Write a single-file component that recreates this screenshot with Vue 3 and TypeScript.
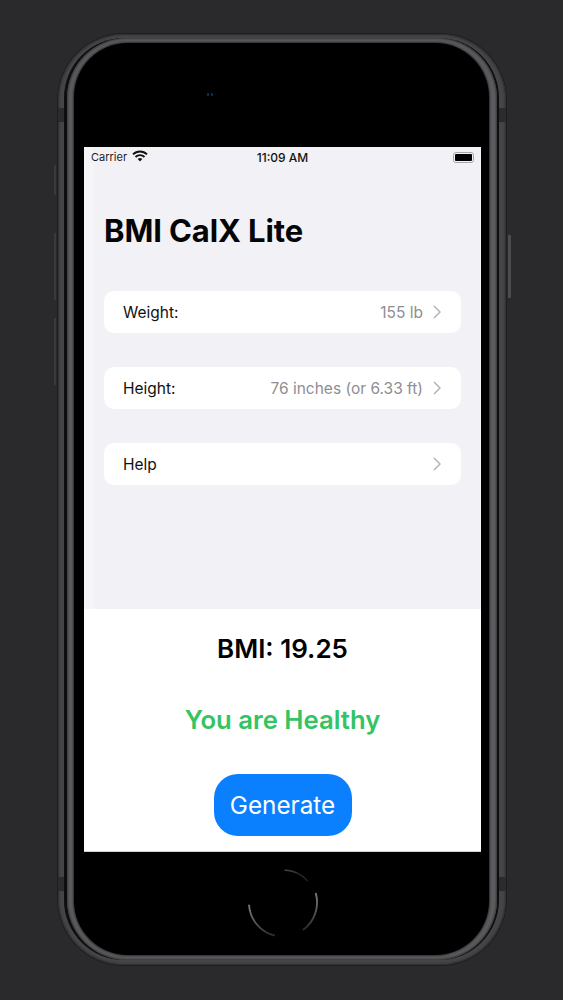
<script setup lang="ts">
interface Row { label: string; value?: string }
const rows: Row[] = [
  { label: 'Weight:', value: '155 lb' },
  { label: 'Height:', value: '76 inches (or 6.33 ft)' },
  { label: 'Help' },
]
</script>

<template>
  <div class="page">
    <div class="phone">
      <span class="side-btn mute"></span>
      <span class="side-btn vol-up"></span>
      <span class="side-btn vol-down"></span>
      <span class="side-btn power"></span>
      <div class="band-outer">
        <div class="band-gap">
          <div class="band-inner">
            <div class="face">
              <div class="bezel-top">
                <span class="camera"><i></i><i></i></span>
              </div>
              <div class="screen">
                <div class="status">
                  <div class="status-left">
                    <span>Carrier</span>
                    <svg class="wifi" viewBox="0 0 16 12" width="16" height="12" aria-hidden="true">
                      <path d="M1 4.4A10 10 0 0 1 15 4.4" fill="none" stroke="#111" stroke-width="1.9" />
                      <path d="M3.5 7A6.4 6.4 0 0 1 12.5 7" fill="none" stroke="#111" stroke-width="1.9" />
                      <path d="M8 11.4L5.7 9.1A3.2 3.2 0 0 1 10.3 9.1Z" fill="#111" />
                    </svg>
                  </div>
                  <span class="clock">11:09 AM</span>
                  <div class="status-right">
                    <span class="battery"><i></i></span>
                  </div>
                </div>
                <div class="content">
                  <h1>BMI CalX Lite</h1>
                  <div class="rows">
                    <div v-for="row in rows" :key="row.label" class="row">
                      <span class="label">{{ row.label }}</span>
                      <span class="value">{{ row.value }}</span>
                      <svg class="chev" viewBox="0 0 8 14" width="8" height="14" aria-hidden="true">
                        <path d="M1 1L7 7L1 13" fill="none" stroke="#b4b4b8" stroke-width="1.5" />
                      </svg>
                    </div>
                  </div>
                </div>
                <div class="result">
                  <div class="bmi">BMI: 19.25</div>
                  <div class="health">You are Healthy</div>
                  <button class="generate" type="button">Generate</button>
                </div>
              </div>
              <div class="bezel-bottom">
                <svg class="home" viewBox="0 0 72 72" width="72" height="72" aria-hidden="true">
                  <defs>
                    <linearGradient id="arcTop" gradientUnits="userSpaceOnUse" x1="37" y1="3" x2="61" y2="14">
                      <stop offset="0" stop-color="#4a4a4a" />
                      <stop offset="1" stop-color="#1c1c1c" />
                    </linearGradient>
                    <linearGradient id="arcRight" gradientUnits="userSpaceOnUse" x1="68" y1="26" x2="56" y2="63">
                      <stop offset="0" stop-color="#777" />
                      <stop offset="1" stop-color="#2a2a2a" />
                    </linearGradient>
                    <linearGradient id="arcLeft" gradientUnits="userSpaceOnUse" x1="2" y1="38" x2="28" y2="69">
                      <stop offset="0" stop-color="#777" />
                      <stop offset="1" stop-color="#2a2a2a" />
                    </linearGradient>
                  </defs>
                  <path d="M37.7 3A33 33 0 0 1 61 14.3" fill="none" stroke="url(#arcTop)" stroke-width="1.6" />
                  <path d="M68.7 26A34 34 0 0 1 56 63" fill="none" stroke="url(#arcRight)" stroke-width="1.9" />
                  <path d="M28 68.7A34 34 0 0 1 2 37.7" fill="none" stroke="url(#arcLeft)" stroke-width="1.9" />
                </svg>
              </div>
            </div>
          </div>
        </div>
      </div>
      <span class="antenna a-tl"></span>
      <span class="antenna a-tr"></span>
      <span class="antenna a-bl"></span>
      <span class="antenna a-br"></span>
    </div>
  </div>
</template>

<style>
html, body { margin: 0; background: #2a292b; }
</style>

<style scoped>
.page {
  width: 563px;
  height: 1000px;
  box-sizing: border-box;
  padding: 34px 0 0 58px;
  background: #2a292b;
  font-family: Inter, "Liberation Sans", sans-serif;
  overflow: hidden;
}
.phone { position: relative; width: 448px; height: 931px; }
.band-outer {
  box-sizing: border-box;
  height: 100%;
  padding: 4px 7px 5px 6px;
  border-radius: 66px;
  background: #454547;
  box-shadow: 0 0 0 1px #1e1e1f, inset 0 0 2px 1px #2c2c2e;
}
.band-gap {
  box-sizing: border-box;
  height: 100%;
  padding: 0 2px 0 3px;
  border-radius: 60px;
  background: #0e0e0f;
}
.band-inner {
  box-sizing: border-box;
  height: 100%;
  padding: 5px 8px 5px 7px;
  border-radius: 60px;
  background: #5c5c5f;
  box-shadow: inset 0 0 2px 1px #38383a;
}
.face {
  box-sizing: border-box;
  height: 100%;
  padding: 0 8px 0 10px;
  border-radius: 54px;
  background: #000;
  box-shadow: 0 0 2px 1px #2c2c2e;
  display: flex;
  flex-direction: column;
  align-items: stretch;
}
.bezel-top {
  height: 104px;
  flex: none;
  position: relative;
}
.camera {
  position: absolute;
  left: 123px;
  top: 50px;
  display: flex;
  gap: 2px;
}
.camera i { width: 2px; height: 3px; background: #12335a; border-radius: 1px; }
.bezel-bottom {
  flex: 1;
  display: flex;
  justify-content: center;
  padding-top: 15px;
}
.home { display: block; }

.antenna { position: absolute; width: 6px; height: 14px; background: #2b2b2d; }
.a-tl { left: 0; top: 74px; }
.a-tr { right: 0; width: 7px; top: 74px; }
.a-bl { left: 0; top: 843px; }
.a-br { right: 0; width: 7px; top: 843px; }

.side-btn { position: absolute; width: 2px; background: #3a3a3c; border-radius: 1px 0 0 1px; }
.mute { left: -4px; top: 131px; height: 30px; }
.vol-up { left: -4px; top: 199px; height: 67px; }
.vol-down { left: -4px; top: 284px; height: 67px; }
.power { right: -5px; width: 3px; top: 201px; height: 63px; border-radius: 0 1px 1px 0; background: #4c4c4f; }

.screen {
  flex: none;
  width: 397px;
  height: 705px;
  background: linear-gradient(90deg, #f5f4f7 10px, #f2f1f5 10px);
  display: flex;
  flex-direction: column;
  overflow: hidden;
}
.status {
  height: 20px;
  flex: none;
  display: grid;
  grid-template-columns: 1fr auto 1fr;
  align-items: center;
  padding: 0 7px;
  font-size: 11px;
  color: #1c1c1e;
}
.status-left { display: flex; align-items: center; gap: 5px; }
.wifi { display: block; margin-top: -2px; }
.clock { font-size: 12px; font-weight: 500; color: #111; }
.status-right { display: flex; justify-content: flex-end; }
.battery {
  box-sizing: border-box;
  width: 21px;
  height: 11px;
  padding: 1px;
  border: 1px solid #a8a8ab;
  border-radius: 3px;
  display: block;
}
.battery i { display: block; height: 100%; background: #000; border-radius: 1px; }

.content {
  flex: 1;
  padding: 0 20px;
}
h1 {
  margin: 46px 0 0;
  font-size: 31px;
  line-height: 36px;
  font-weight: 700;
  letter-spacing: -0.1px;
  color: #050505;
}
.rows {
  margin-top: 42px;
  display: flex;
  flex-direction: column;
  gap: 34px;
}
.row {
  height: 42px;
  box-sizing: border-box;
  padding: 0 20px 0 19px;
  display: flex;
  align-items: center;
  background: #fff;
  border-radius: 10px;
  font-size: 15.5px;
}
.label { color: #111; }
.value { margin-left: auto; color: #8e8e93; }
.chev { display: block; margin-left: 10px; }

.result {
  flex: none;
  height: 243px;
  box-sizing: border-box;
  background: #fff;
  padding-top: 24px;
  border-bottom: 1px solid #d0d0d0;
  display: flex;
  flex-direction: column;
  align-items: center;
}
.bmi {
  font-size: 26px;
  line-height: 32px;
  font-weight: 600;
  color: #000;
}
.health {
  margin-top: 39px;
  font-size: 25.7px;
  line-height: 32px;
  font-weight: 600;
  color: #34c463;
}
.generate {
  margin-top: 38px;
  width: 138px;
  height: 62px;
  border: 0;
  padding: 0;
  border-radius: 24px;
  background: #0a80ff;
  color: #fff;
  font-family: inherit;
  font-size: 24.3px;
  font-weight: 400;
}
</style>
